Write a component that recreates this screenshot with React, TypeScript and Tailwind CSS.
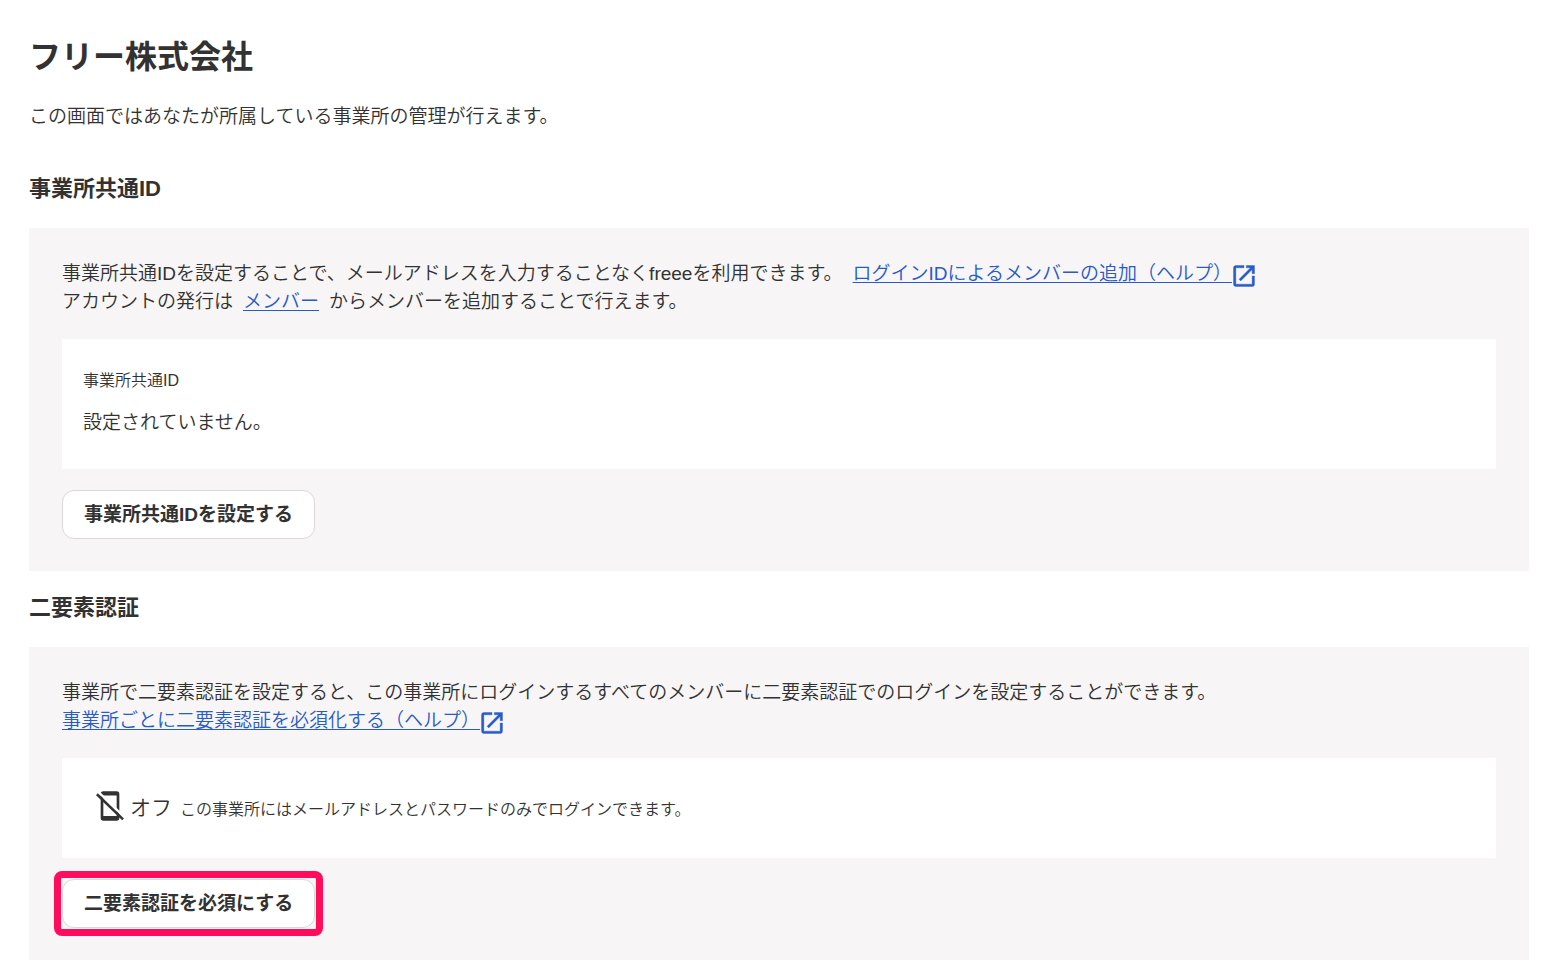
import type { ReactNode } from "react";

interface SectionProps {
	title: string;
	children: ReactNode;
}

function Section({ title, children }: SectionProps) {
	return (
		<section>
			<h2 className="text-[22px] leading-8 font-bold">{title}</h2>
			<div className="mt-[23px] bg-[#f7f5f6] px-[33px] py-8">{children}</div>
		</section>
	);
}

function OpenInNewIcon() {
	return (
		<svg viewBox="0 0 24 24" className="mt-0.5 -mb-0.5 -ml-0.5 size-7" aria-hidden="true">
			<path
				fill="currentColor"
				stroke="currentColor"
				strokeWidth="0.3"
				d="M19 19H5V5h7V3H5a2 2 0 0 0-2 2v14a2 2 0 0 0 2 2h14c1.1 0 2-.9 2-2v-7h-2v7zM14 3v2h3.59l-9.83 9.83 1.41 1.41L19 6.41V10h2V3h-7z"
			/>
		</svg>
	);
}

function MobileOffIcon() {
	return (
		<svg viewBox="0 0 24 24" className="-mt-1 size-8" fill="none" aria-hidden="true">
			<path
				fill="currentColor"
				fillRule="evenodd"
				d="M7 1h10a2 2 0 0 1 2 2v18a2 2 0 0 1-2 2H7a2 2 0 0 1-2-2V3a2 2 0 0 1 2-2zM7 4.2v15.3h10V4.2z"
			/>
			<path stroke="#fff" strokeWidth="1.8" d="M3.6 1.8l19 18.4" />
			<path stroke="currentColor" strokeWidth="1.9" d="M2.2 3.2l19.6 18.8" />
		</svg>
	);
}

function HelpLink({ children }: { children: ReactNode }) {
	return (
		<a href="#help" className="inline-flex items-center text-[#285ac8]">
			<span className="underline underline-offset-2">{children}</span>
			<OpenInNewIcon />
		</a>
	);
}

function ActionButton({ children }: { children: ReactNode }) {
	return (
		<button
			type="button"
			className="block h-[49px] rounded-xl border border-[#dcd8d8] bg-white px-[21px] text-[19px] font-bold"
		>
			{children}
		</button>
	);
}

export default function App() {
	return (
		<main className="bg-white pt-[33px] pr-[30px] pb-4 pl-[29px] font-['Liberation_Sans','Noto_Sans_CJK_JP',sans-serif] text-[19px] leading-7 font-[350] text-[#323232]">
			<h1 className="text-[32px] leading-12 font-bold">フリー株式会社</h1>
			<p className="mt-[22px] mb-[42px]">
				この画面ではあなたが所属している事業所の管理が行えます。
			</p>

			<div className="flex flex-col gap-[21px]">
				<Section title="事業所共通ID">
					<p className="flex flex-wrap items-center gap-x-[10px]">
						<span>
							事業所共通IDを設定することで、メールアドレスを入力することなくfreeeを利用できます。
						</span>
						<HelpLink>ログインIDによるメンバーの追加（ヘルプ）</HelpLink>
					</p>
					<p>
						アカウントの発行は
						<a href="#members" className="mx-[10px] text-[#285ac8] underline underline-offset-2">
							メンバー
						</a>
						からメンバーを追加することで行えます。
					</p>
					<dl className="mt-[23px] mb-[21px] bg-white px-[21px] pt-7 pb-8">
						<dt className="text-base leading-7">事業所共通ID</dt>
						<dd className="mt-[14px]">設定されていません。</dd>
					</dl>
					<ActionButton>事業所共通IDを設定する</ActionButton>
				</Section>

				<Section title="二要素認証">
					<p>
						事業所で二要素認証を設定すると、この事業所にログインするすべてのメンバーに二要素認証でのログインを設定することができます。
					</p>
					<p className="flex">
						<HelpLink>事業所ごとに二要素認証を必須化する（ヘルプ）</HelpLink>
					</p>
					<div className="mt-[23px] mb-[21px] flex items-center bg-white px-8 py-9">
						<MobileOffIcon />
						<p className="ml-1 flex items-baseline gap-2">
							<span className="text-[21px]">オフ</span>
							<span className="text-base leading-6">
								この事業所にはメールアドレスとパスワードのみでログインできます。
							</span>
						</p>
					</div>
					<div className="relative w-fit">
						<ActionButton>二要素認証を必須にする</ActionButton>
						<div className="pointer-events-none absolute -inset-2 rounded-lg border-[7px] border-[#ff0c5b]" />
					</div>
				</Section>
			</div>
		</main>
	);
}
